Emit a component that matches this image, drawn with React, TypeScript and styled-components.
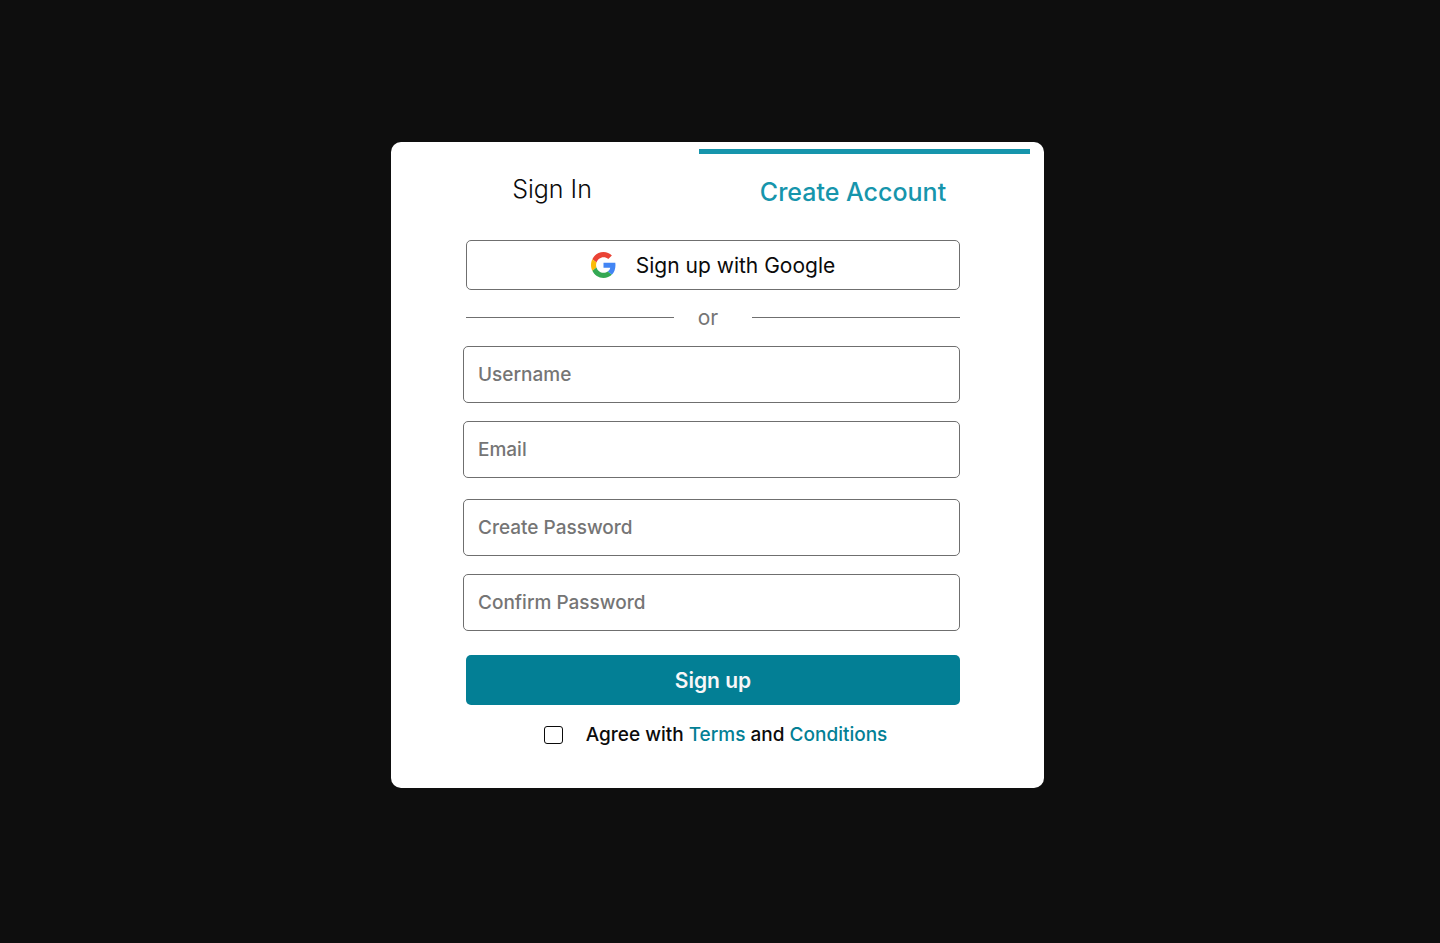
import React, { useState } from "react";
import styled, { createGlobalStyle } from "styled-components";

const colors = {
  page: "#0e0e0e",
  accent: "#1695ac",
  primary: "#037f95",
  line: "#6f6f6f",
  muted: "#757575",
  text: "#0b0b0b",
};

const GlobalStyle = createGlobalStyle`
  *, *::before, *::after { box-sizing: border-box; }
  body {
    margin: 0;
    background: ${colors.page};
    color: ${colors.text};
    font-family: Inter, "Open Sans", sans-serif;
  }
  button, input { font-family: inherit; }
`;

const Page = styled.main`
  min-height: 100vh;
  display: flex;
  align-items: center;
  justify-content: center;
  padding: 0 5px 13px 0;
`;

const Card = styled.section`
  width: 100%;
  max-width: 653px;
  padding: 7px 14px 40px;
  background: #fff;
  border-radius: 10px;
`;

const Tabs = styled.div`
  display: grid;
  grid-template-columns: 294fr 331fr;
  align-items: start;
  margin-bottom: 20px;
`;

const Tab = styled.button<{ $active?: boolean }>`
  padding: ${(p) => (p.$active ? "22px 23px 12px 0" : "24px 0 12px")};
  border: 0;
  border-top: ${(p) => (p.$active ? `5px solid ${colors.accent}` : "0")};
  background: none;
  color: ${(p) => (p.$active ? colors.accent : colors.text)};
  font-size: 25px;
  font-weight: ${(p) => (p.$active ? 500 : 300)};
  line-height: 32px;
  cursor: pointer;
`;

const Form = styled.form`
  padding: 0 70px 0 58px;
`;

const Action = styled.button<{ $primary?: boolean }>`
  display: flex;
  align-items: center;
  justify-content: center;
  gap: 20px;
  width: calc(100% - 3px);
  height: 50px;
  margin-left: 3px;
  border: ${(p) => (p.$primary ? "0" : `1px solid ${colors.line}`)};
  border-radius: 5px;
  background: ${(p) => (p.$primary ? colors.primary : "#fff")};
  color: ${(p) => (p.$primary ? "#f8f6f8" : colors.text)};
  font-size: 21px;
  font-weight: ${(p) => (p.$primary ? 600 : 400)};
  cursor: pointer;
`;

const Divider = styled.div`
  display: flex;
  align-items: center;
  height: 55px;
  margin: 0 0 1px 3px;
  color: ${colors.muted};
  font-size: 21px;

  &::before,
  &::after {
    content: "";
    flex: 1;
    height: 1px;
    background: ${colors.line};
  }
  span { padding: 0 34px 0 24px; }
`;

const Fields = styled.div`
  display: grid;
  gap: 21px;
  margin-bottom: 24px;
`;

const FieldPair = styled.div`
  display: grid;
  gap: 18px;
`;

const Field = styled.input`
  width: 100%;
  height: 57px;
  padding: 0 14px;
  border: 1px solid ${colors.line};
  border-radius: 5px;
  background: #fff;
  color: ${colors.text};
  font-size: 19px;
  font-weight: 500;

  &::placeholder { color: ${colors.muted}; opacity: 1; }
`;

const Agreement = styled.div`
  display: flex;
  align-items: center;
  justify-content: center;
  gap: 23px;
  margin-top: 16px;
  padding-left: 8px;
  font-size: 19px;
  font-weight: 500;
  line-height: 27px;
`;

const Checkbox = styled.input`
  appearance: none;
  width: 19px;
  height: 18px;
  margin: 0;
  border: 1px solid ${colors.text};
  border-radius: 3px;
  background: #fff;

  &:checked { background: ${colors.primary}; }
`;

const TextLink = styled.a`
  color: ${colors.primary};
  text-decoration: none;
`;

const GoogleLogo = () => (
  <svg width="25" height="26" viewBox="0 0 48 48" preserveAspectRatio="none" aria-hidden="true">
    <path fill="#EA4335" d="M24 9.5c3.54 0 6.71 1.22 9.21 3.6l6.85-6.85C35.9 2.38 30.47 0 24 0 14.62 0 6.51 5.38 2.56 13.22l7.98 6.19C12.43 13.72 17.74 9.5 24 9.5z" />
    <path fill="#4285F4" d="M46.98 24.55c0-1.57-.15-3.09-.38-4.55H24v9.02h12.94c-.58 2.96-2.26 5.48-4.78 7.18l7.73 6c4.51-4.18 7.09-10.36 7.09-17.65z" />
    <path fill="#FBBC05" d="M10.53 28.59c-.48-1.45-.76-2.99-.76-4.59s.27-3.14.76-4.59l-7.98-6.19C.92 16.46 0 20.12 0 24c0 3.88.92 7.54 2.56 10.78l7.97-6.19z" />
    <path fill="#34A853" d="M24 48c6.48 0 11.93-2.13 15.89-5.81l-7.73-6c-2.15 1.45-4.92 2.3-8.16 2.3-6.26 0-11.57-4.22-13.47-9.91l-7.98 6.19C6.51 42.62 14.62 48 24 48z" />
  </svg>
);

export default function App() {
  const [agreed, setAgreed] = useState(false);
  return (
    <>
      <GlobalStyle />
      <Page>
        <Card>
          <Tabs role="tablist">
            <Tab type="button" role="tab" aria-selected={false}>Sign In</Tab>
            <Tab type="button" role="tab" aria-selected $active>Create Account</Tab>
          </Tabs>
          <Form onSubmit={(e) => e.preventDefault()}>
            <Action type="button">
              <GoogleLogo />
              Sign up with Google
            </Action>
            <Divider><span>or</span></Divider>
            <Fields>
              <FieldPair>
                <Field type="text" placeholder="Username" aria-label="Username" />
                <Field type="email" placeholder="Email" aria-label="Email" />
              </FieldPair>
              <FieldPair>
                <Field type="password" placeholder="Create Password" aria-label="Create Password" />
                <Field type="password" placeholder="Confirm Password" aria-label="Confirm Password" />
              </FieldPair>
            </Fields>
            <Action type="submit" $primary>Sign up</Action>
            <Agreement>
              <Checkbox id="agree" type="checkbox" checked={agreed} onChange={(e) => setAgreed(e.target.checked)} />
              <label htmlFor="agree">
                Agree with <TextLink href="#terms">Terms</TextLink> and <TextLink href="#conditions">Conditions</TextLink>
              </label>
            </Agreement>
          </Form>
        </Card>
      </Page>
    </>
  );
}
